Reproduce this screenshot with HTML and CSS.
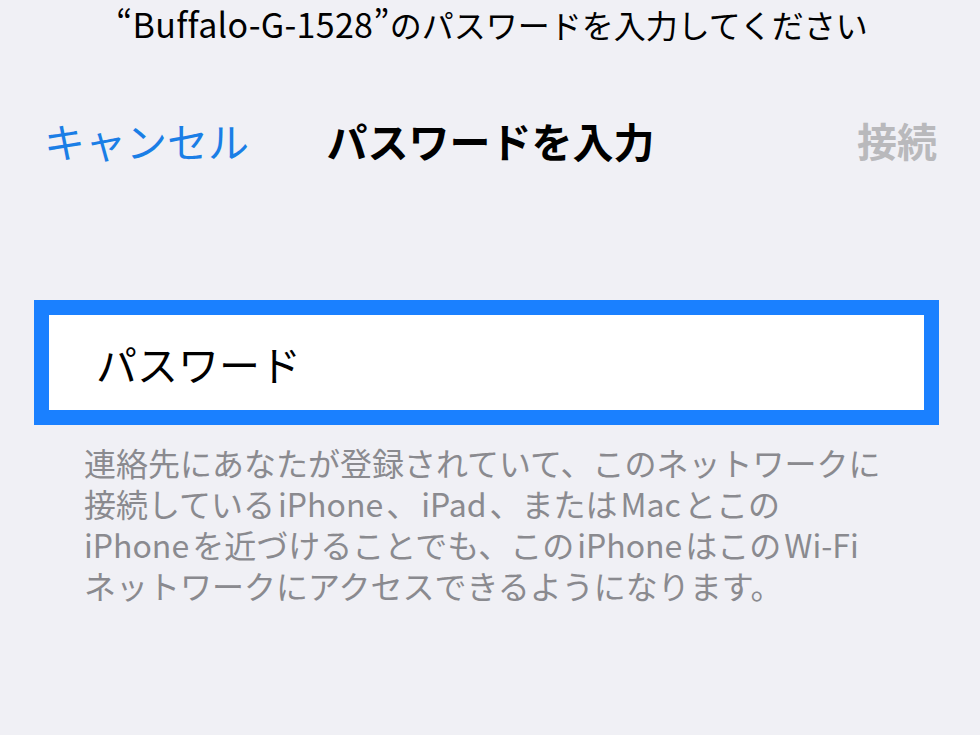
FILE: index.html
```html
<!DOCTYPE html>
<html lang="ja">
<head>
<meta charset="utf-8">
<title>パスワードを入力</title>
<link rel="stylesheet" href="styles.css">
</head>
<body>
<div class="screen">
  <div class="prompt"><span class="prompt-name">“Buffalo-G-1528”</span>のパスワードを入力してください</div>
  <div class="nav">
    <span class="nav-cancel">キャンセル</span>
    <span class="nav-title">パスワードを入力</span>
    <span class="nav-join">接続</span>
  </div>
  <div class="field">
    <span class="placeholder">パスワード</span>
  </div>
  <p class="note">連絡先にあなたが登録されていて、このネットワークに<br>接続している<span class="lat">iPhone</span>、<span class="lat">iPad</span>、または<span class="lat">Mac</span>とこの<br><span class="lat lat-first">iPhone</span>を近づけることでも、この<span class="lat">iPhone</span>はこの<span class="lat">Wi-Fi</span><br>ネットワークにアクセスできるようになります。</p>
</div>
</body>
</html>
```
FILE: styles.css
```css
html, body {
  margin: 0;
  padding: 0;
  background: #f0f0f5;
}
.screen {
  width: 980px;
  height: 735px;
  overflow: hidden;
  font-family: "Noto Sans CJK JP", "Noto Sans", sans-serif;
  color: #000;
}
.prompt {
  height: 48px;
  line-height: 48px;
  font-size: 32px;
  text-align: center;
  white-space: nowrap;
  padding-left: 4px;
}
.prompt-name {
  display: inline-block;
  font-size: 34px;
  letter-spacing: 0.3px;
  line-height: 48px;
}
.nav {
  margin-top: 52px;
  height: 80px;
  line-height: 80px;
  display: grid;
  grid-template-columns: 1fr auto 1fr;
  padding: 0 43px 0 44px;
  font-size: 41px;
}
.nav-cancel {
  color: #1a7ee6;
  justify-self: start;
}
.nav-title {
  font-weight: 700;
  font-size: 41px;
}
.nav-join {
  color: #b9b9bc;
  font-size: 40px;
  font-weight: 700;
  justify-self: end;
}
.field {
  margin: 120px 41px 0 34px;
  border: 15px solid #1a80ff;
  background: #fff;
  height: 95px;
  display: flex;
  align-items: center;
  padding-left: 47px;
}
.placeholder {
  font-size: 41px;
  color: #000;
}
.note {
  margin: 17px 0 0;
  padding-left: 84px;
  font-size: 32px;
  line-height: 41px;
  color: #8a8a8f;
  white-space: nowrap;
}
.lat {
  display: inline-block;
  line-height: 41px;
  margin: 0 3px;
}
.lat-first {
  margin-left: 0;
}
```
